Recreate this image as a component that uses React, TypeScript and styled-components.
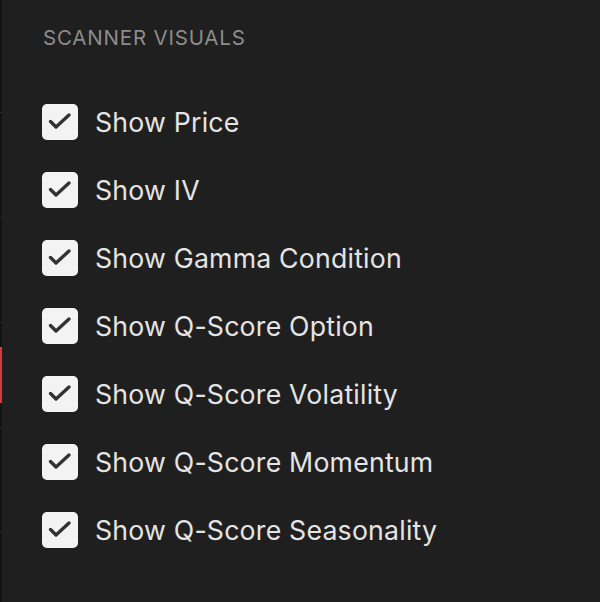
import styled, { createGlobalStyle } from 'styled-components';

const GlobalStyle = createGlobalStyle`
    html, body {
        margin: 0;
        padding: 0;
        background: #1f1f1f;
    }
    body {
        font-family: Inter, "Noto Sans", sans-serif;
        -webkit-font-smoothing: antialiased;
    }
`;

const Page = styled.div`
    display: flex;
    width: 600px;
    height: 602px;
    overflow: hidden;
    background: #1f1f1f;
`;

const EdgeStrip = styled.div`
    width: 2px;
    flex-shrink: 0;
    background: #121212;
    display: flex;
    flex-direction: column;
    padding-top: 8px;
`;

const EdgeItem = styled.div<{ $active?: boolean }>`
    height: 104px;
    flex-shrink: 0;
    border-bottom: 1px solid #2c2c2c;
    display: flex;
    align-items: center;

    &::before {
        content: '';
        display: ${(p) => (p.$active ? 'block' : 'none')};
        width: 2px;
        height: 56px;
        background: #d8393a;
    }
`;

const Panel = styled.section`
    flex: 1;
    padding: 26px 0 0 40px;
`;

const Title = styled.h2`
    margin: 0 0 54px 1px;
    color: #8c8c8c;
    font-weight: 400;
    font-size: 20.5px;
    line-height: 24px;
    letter-spacing: 0.8px;
`;

const List = styled.div`
    display: flex;
    flex-direction: column;
    gap: 32px;
`;

const Option = styled.label`
    display: flex;
    align-items: center;
    gap: 17px;
    height: 36px;
    cursor: pointer;
`;

const Box = styled.span<{ $checked: boolean }>`
    width: 36px;
    height: 36px;
    flex-shrink: 0;
    border-radius: 5px;
    background: ${(p) => (p.$checked ? '#f3f3f3' : 'transparent')};
    border: ${(p) => (p.$checked ? 'none' : '2px solid #8c8c8c')};
    display: flex;
    align-items: center;
    justify-content: center;
`;

const Label = styled.span`
    color: #e4e4e4;
    font-size: 26.7px;
    line-height: 32px;
    letter-spacing: 0.2px;
`;

const options = [
    'Show Price',
    'Show IV',
    'Show Gamma Condition',
    'Show Q-Score Option',
    'Show Q-Score Volatility',
    'Show Q-Score Momentum',
    'Show Q-Score Seasonality',
];

const Check = () => (
    <svg width="36" height="36" viewBox="0 0 36 36">
        <path
            d="M8.5 17.5 L14 23 L27 11"
            fill="none"
            stroke="#333"
            strokeWidth="3.4"
            strokeLinecap="round"
            strokeLinejoin="round"
        />
    </svg>
);

const App = () => {
    return (
        <>
            <GlobalStyle />
            <Page>
                <EdgeStrip>
                    {[0, 1, 2, 3, 4, 5].map((i) => (
                        <EdgeItem key={i} $active={i === 3} />
                    ))}
                </EdgeStrip>
                <Panel>
                    <Title>SCANNER VISUALS</Title>
                    <List>
                        {options.map((name) => (
                            <Option key={name}>
                                <Box $checked>
                                    <Check />
                                </Box>
                                <Label>{name}</Label>
                            </Option>
                        ))}
                    </List>
                </Panel>
            </Page>
        </>
    );
};
export default App;
